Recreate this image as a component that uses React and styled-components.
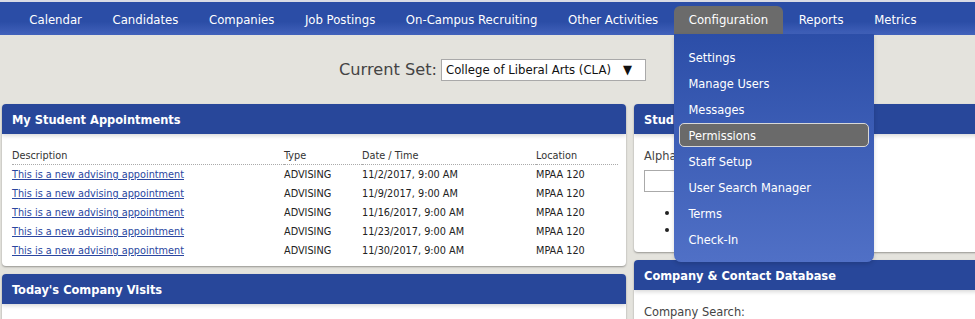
import styled, { createGlobalStyle } from 'styled-components';

const GlobalStyle = createGlobalStyle`
  body {
    margin: 0;
    background: #e4e3dd;
    font-family: "DejaVu Sans Condensed", "DejaVu Sans", sans-serif;
    color: #222;
    overflow: hidden;
  }
`;

const Page = styled.div`
  width: 975px;
  height: 319px;
  position: relative;
  overflow: hidden;
`;

const NavBar = styled.nav`
  height: 35px;
  box-sizing: border-box;
  border-top: 2px solid #d9dbe6;
  background: linear-gradient(#2b4da6 60%, #4262bb);
  display: flex;
  align-items: flex-end;
  padding-left: 14px;
`;

const NavItem = styled.div`
  position: relative;
  height: 29px;
  box-sizing: border-box;
  display: flex;
  align-items: center;
  padding: 0 15.3px 3px;
  color: #fff;
  font-size: 13px;
  white-space: nowrap;
  border-radius: 6px 6px 0 0;
  background: ${(p) => (p.$active ? '#6b6b6b' : 'transparent')};
`;

const Dropdown = styled.div`
  position: absolute;
  top: 28px;
  left: 0;
  width: 200px;
  box-sizing: border-box;
  padding: 10px 0;
  display: flex;
  flex-direction: column;
  background: linear-gradient(#2c4ea8, #5070c6);
  border-radius: 0 0 7px 7px;
  box-shadow: 0 2px 4px rgba(0, 0, 0, 0.15);
  z-index: 5;
`;

const MenuItem = styled.div`
  height: 24px;
  margin: 1px 5px;
  box-sizing: border-box;
  padding-left: 9px;
  display: flex;
  align-items: center;
  font-size: 12.7px;
  color: #fff;
  border-radius: 5px;
  border: 1px solid ${(p) => (p.$hover ? '#d8d8d8' : 'transparent')};
  background: ${(p) => (p.$hover ? '#6a6a6a' : 'transparent')};
`;

const SetRow = styled.div`
  display: flex;
  justify-content: center;
  align-items: center;
  gap: 4px;
  height: 69px;
  padding-left: 10px;
`;

const SetLabel = styled.span`
  font-family: "DejaVu Sans", sans-serif;
  font-size: 16.2px;
  color: #444;
`;

const SetSelect = styled.div`
  width: 205px;
  height: 22px;
  box-sizing: border-box;
  background: #fff;
  border: 1px solid #a9a9a9;
  display: flex;
  align-items: center;
  justify-content: space-between;
  padding: 0 13px 0 4px;
  font-size: 13px;
  color: #111;
  white-space: nowrap;
`;

const Columns = styled.div`
  display: grid;
  grid-template-columns: 624px 360px;
  gap: 8px;
  padding-left: 2px;
`;

const Column = styled.div`
  display: flex;
  flex-direction: column;
  gap: 8px;
`;

const Panel = styled.section`
  background: #fff;
  border-radius: 4px;
  box-shadow: 0 1px 2px rgba(0, 0, 0, 0.35);
  height: ${(p) => p.$h}px;
  overflow: hidden;
`;

const PanelHeader = styled.h2`
  margin: 0;
  height: 30px;
  box-sizing: border-box;
  padding-left: 10px;
  display: flex;
  align-items: center;
  background: #28479a;
  color: #fff;
  font-size: 12.7px;
  font-weight: bold;
  white-space: nowrap;
  box-shadow: 0 2px 4px rgba(0, 0, 0, 0.15);
`;

const PanelBody = styled.div`
  padding: ${(p) => p.$pad || '13px 10px 0'};
`;

const Table = styled.table`
  width: 606px;
  border-collapse: collapse;
  font-size: 10.8px;
  color: #222;
`;

const Th = styled.th`
  text-align: left;
  font-weight: normal;
  color: #333;
  height: 17px;
  padding: 0;
  border-bottom: 1px dotted #aaa;
  width: ${(p) => p.$w || 'auto'};
`;

const Td = styled.td`
  height: 19px;
  padding: 0;
`;

const Link = styled.a`
  color: #2a46a0;
  text-decoration: underline;
`;

const FieldLabel = styled.div`
  font-size: 12.7px;
  color: #444;
  margin-bottom: ${(p) => p.$mb || 5}px;
`;

const TextInput = styled.div`
  width: 200px;
  height: 22px;
  border: 1px solid #aaa;
  box-sizing: border-box;
`;

const Bullets = styled.ul`
  margin: 12px 0 0;
  padding-left: 35px;
  font-size: 12px;
  line-height: 17px;
`;

const appts = ['11/2/2017', '11/9/2017', '11/16/2017', '11/23/2017', '11/30/2017'];

const navItems = [
  'Calendar',
  'Candidates',
  'Companies',
  'Job Postings',
  'On-Campus Recruiting',
  'Other Activities',
  'Configuration',
  'Reports',
  'Metrics',
];

const menu = [
  'Settings',
  'Manage Users',
  'Messages',
  'Permissions',
  'Staff Setup',
  'User Search Manager',
  'Terms',
  'Check-In',
];

export default function App() {
  return (
    <Page>
      <GlobalStyle />
      <NavBar>
        {navItems.map((n) => (
          <NavItem key={n} $active={n === 'Configuration'}>
            {n}
            {n === 'Configuration' && (
              <Dropdown>
                {menu.map((m) => (
                  <MenuItem key={m} $hover={m === 'Permissions'}>
                    {m}
                  </MenuItem>
                ))}
              </Dropdown>
            )}
          </NavItem>
        ))}
      </NavBar>

      <SetRow>
        <SetLabel>Current Set:</SetLabel>
        <SetSelect>
          <span>College of Liberal Arts (CLA)</span>
          <span>▼</span>
        </SetSelect>
      </SetRow>

      <Columns>
        <Column>
          <Panel $h={162}>
            <PanelHeader>My Student Appointments</PanelHeader>
            <PanelBody>
              <Table>
                <thead>
                  <tr>
                    <Th $w="272px">Description</Th>
                    <Th $w="78px">Type</Th>
                    <Th $w="174px">Date / Time</Th>
                    <Th>Location</Th>
                  </tr>
                </thead>
                <tbody>
                  {appts.map((d) => (
                    <tr key={d}>
                      <Td>
                        <Link>This is a new advising appointment</Link>
                      </Td>
                      <Td>ADVISING</Td>
                      <Td>{d}, 9:00 AM</Td>
                      <Td>MPAA 120</Td>
                    </tr>
                  ))}
                </tbody>
              </Table>
            </PanelBody>
          </Panel>
          <Panel $h={100}>
            <PanelHeader>Today's Company Visits</PanelHeader>
          </Panel>
        </Column>
        <Column>
          <Panel $h={148}>
            <PanelHeader>Student Search</PanelHeader>
            <PanelBody $pad="14px 10px 0">
              <FieldLabel $mb={7}>Alphabetical Search</FieldLabel>
              <TextInput />
              <Bullets>
                <li>Advanced Search</li>
                <li>Saved Searches</li>
              </Bullets>
            </PanelBody>
          </Panel>
          <Panel $h={100}>
            <PanelHeader>Company &amp; Contact Database</PanelHeader>
            <PanelBody $pad="14px 10px 0">
              <FieldLabel>Company Search:</FieldLabel>
            </PanelBody>
          </Panel>
        </Column>
      </Columns>
    </Page>
  );
}
